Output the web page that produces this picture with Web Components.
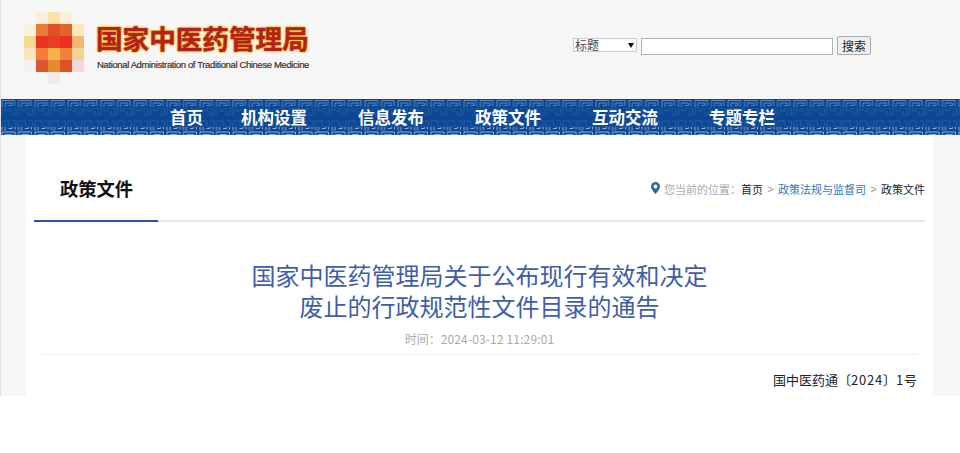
<!DOCTYPE html>
<html lang="zh"><head><meta charset="utf-8"><style>
html,body{margin:0;padding:0;background:#fff}
body{font-family:"Noto Sans CJK SC","Liberation Sans",sans-serif;height:453px;overflow:hidden}
</style></head><body>
<site-page>
<site-header slot="header"></site-header>
<site-nav slot="nav"></site-nav>
<article-card slot="card"></article-card>
</site-page>
<script>
function el(name,html){customElements.define(name,class extends HTMLElement{constructor(){super();this.attachShadow({mode:'open'}).innerHTML=html;}});}
const CJK='"Noto Sans CJK SC","Liberation Sans",sans-serif';
el('site-page',`<style>:host{display:block;width:960px;height:396px;background:#f6f6f6;border-left:1px solid #e0e0e0;box-sizing:border-box;overflow:hidden}</style><slot name="header"></slot><slot name="nav"></slot><slot name="card"></slot>`);
const cells=[[null,'#f8efdc','#fae3a8','#f9f0da',null],['#f9f2de','#e57e38','#e04f26','#e2632b','#fae8bb'],['#f5d98f','#ed3224','#e83f25','#ee2f24','#f0b870'],['#f8e5bd','#f07e38','#f7b148','#f37f3b','#f5d193'],['#f6f1ef','#dc5530','#e58a2f','#db5228','#f2dadb'],[null,'#f8f6f3','#f3e9ea','#f8f6f4',null]];
el('logo-mark',`<style>:host{display:block;width:60px;height:72px}svg{display:block}</style><svg width="60" height="72" shape-rendering="crispEdges">${cells.map((r,y)=>r.map((c,x)=>c?`<rect x="${x*12}" y="${y*12}" width="12" height="12" fill="${c}"/>`:'').join('')).join('')}</svg>`);
el('site-header',`<style>
:host{display:flex;height:99px;box-sizing:border-box;padding:12px 0 0 23px;position:relative}
.t{margin-left:12px;width:240px;padding-top:9px}
.cn{font:700 26.6px/34px ${CJK};color:#b3211a;white-space:nowrap;-webkit-text-stroke:.4px #b3211a;text-shadow:0 0 1px #f9c52f,0 0 1px #f9c52f,0 0 2px #f9c52f,0 0 2px #f9c52f,0 0 3px #f9c52f}
.en{font:400 9.5px/12px "Liberation Sans",sans-serif;color:#3e2f26;white-space:nowrap;letter-spacing:-.37px;margin:4px 0 0 1px;-webkit-text-stroke:.2px #3e2f26}
form{display:flex;align-items:flex-end;gap:4px;margin:24px 0 0 237px;height:19px}
select{appearance:none;-webkit-appearance:none;width:64px;height:14px;box-sizing:border-box;font:12px/12px ${CJK};padding:0 0 0 1px;border:1px solid #ccc;color:#444;margin-bottom:3px;border-radius:0;overflow:visible;background:#fff url("data:image/svg+xml,%3Csvg xmlns='http://www.w3.org/2000/svg' width='8' height='6'%3E%3Cpath d='M1 1h6L4 6z' fill='%23111'/%3E%3C/svg%3E") no-repeat 53px 3px}
input{width:192px;height:17px;box-sizing:border-box;border:1px solid #b4b4b4;background:#fff;padding:0}
button{width:34px;height:19px;box-sizing:border-box;padding:0;font:12px/16px ${CJK};color:#222;border:1px solid #aaa;border-radius:2px;background:#f0f0f0}
</style><logo-mark></logo-mark><div class="t"><div class="cn">国家中医药管理局</div><div class="en">National Administration of Traditional Chinese Medicine</div></div>
<form onsubmit="return false"><select><option>标题</option></select><input type="text"><button>搜索</button></form>`);
el('site-nav',`<style>
:host{display:block;position:relative;height:36px;background:#0b4793;overflow:hidden}
svg{position:absolute;left:0;top:0}
ul{position:relative;display:flex;margin:0;padding:0 0 0 169px;list-style:none}
li{width:117px;font:700 16.5px/36px ${CJK};color:#fff;white-space:nowrap}
li:first-child{width:71px}
</style>
<svg width="960" height="36"><defs>
<pattern id="a" width="16.5" height="9" patternUnits="userSpaceOnUse"><path d="M1 8V1.5H13.5V7M4 8V4H11V6.5H7.5" fill="none" stroke="#7096c8" stroke-width=".8"/></pattern>
<pattern id="b" width="16.5" height="19" patternUnits="userSpaceOnUse"><path d="M1 16V3H8V12H4V7M8.5 9H15V3H11.5M15 9V16H11V12" fill="none" stroke="#2a60a8" stroke-width=".8"/></pattern>
<pattern id="c" width="16.5" height="8" patternUnits="userSpaceOnUse"><path d="M1 7.5V1H14V6.5M4 7.5V3.5H11V5.5H7.5" fill="none" stroke="#a0bbdd" stroke-width=".9"/></pattern>
</defs>
<rect width="960" height="9" fill="url(#a)"/><rect y="9" width="960" height="19" fill="url(#b)"/><rect y="28" width="960" height="8" fill="url(#c)"/></svg>
<ul><li>首页</li><li>机构设置</li><li>信息发布</li><li>政策文件</li><li>互动交流</li><li>专题专栏</li></ul>`);
el('crumb-trail',`<style>:host{display:flex;align-items:center;font:11px/14px ${CJK};color:#aaa;white-space:nowrap}
svg{margin-right:4px;margin-top:-2px}.d{color:#222}.b{color:#2e78bd}.s{width:15px;text-align:center;color:#999;font-family:"Liberation Sans",sans-serif}</style>
<svg width="9" height="12" viewBox="0 0 9 12"><path fill-rule="evenodd" fill="#2a6c9c" d="M4.5 0A4.5 4.5 0 0 0 0 4.5C0 7.5 4.5 12 4.5 12S9 7.5 9 4.5A4.5 4.5 0 0 0 4.5 0ZM4.5 2.6a1.9 1.9 0 1 1 0 3.8a1.9 1.9 0 0 1 0-3.8Z"/></svg>
<span>您当前的位置：</span><span class="d">首页</span><span class="s">&gt;</span><span class="b">政策法规与监督司</span><span class="s">&gt;</span><span class="d">政策文件</span>`);
el('article-card',`<style>
:host{display:block;width:907px;height:261px;margin-left:25px;background:#fff;box-sizing:border-box;padding:0 8px;overflow:hidden}
.head{display:flex;justify-content:space-between;height:85px;border-bottom:2px solid #e6e6e6;box-sizing:content-box}
h2{margin:0 0 -2px;width:124px;height:87px;box-sizing:border-box;padding:38px 0 0 26px;font:700 18.3px/30px ${CJK};color:#111;white-space:nowrap;border-bottom:2px solid #2a52a4}
crumb-trail{margin-top:47px;height:14px}
.body{padding:0 8px}
h1{margin:0;padding-top:37px;font:400 24px/31px ${CJK};color:#3f5ea6;text-align:center}
.time{font:12px/18px ${CJK};color:#aaa;text-align:center;margin-top:9px;height:24px;border-bottom:1px solid #eee}
.time span{letter-spacing:.14px}
.num{font:13px/20px ${CJK};color:#222;text-align:right;margin-top:15px}
.num span{letter-spacing:.8px}
</style>
<div class="head"><h2>政策文件</h2><crumb-trail></crumb-trail></div>
<div class="body"><h1>国家中医药管理局关于公布现行有效和决定<br>废止的行政规范性文件目录的通告</h1>
<div class="time">时间：<span>2024-03-12 11:29:01</span></div><div class="num">国中医药通〔<span>2024</span>〕<span>1</span>号</div></div>`);
</script></body></html>
